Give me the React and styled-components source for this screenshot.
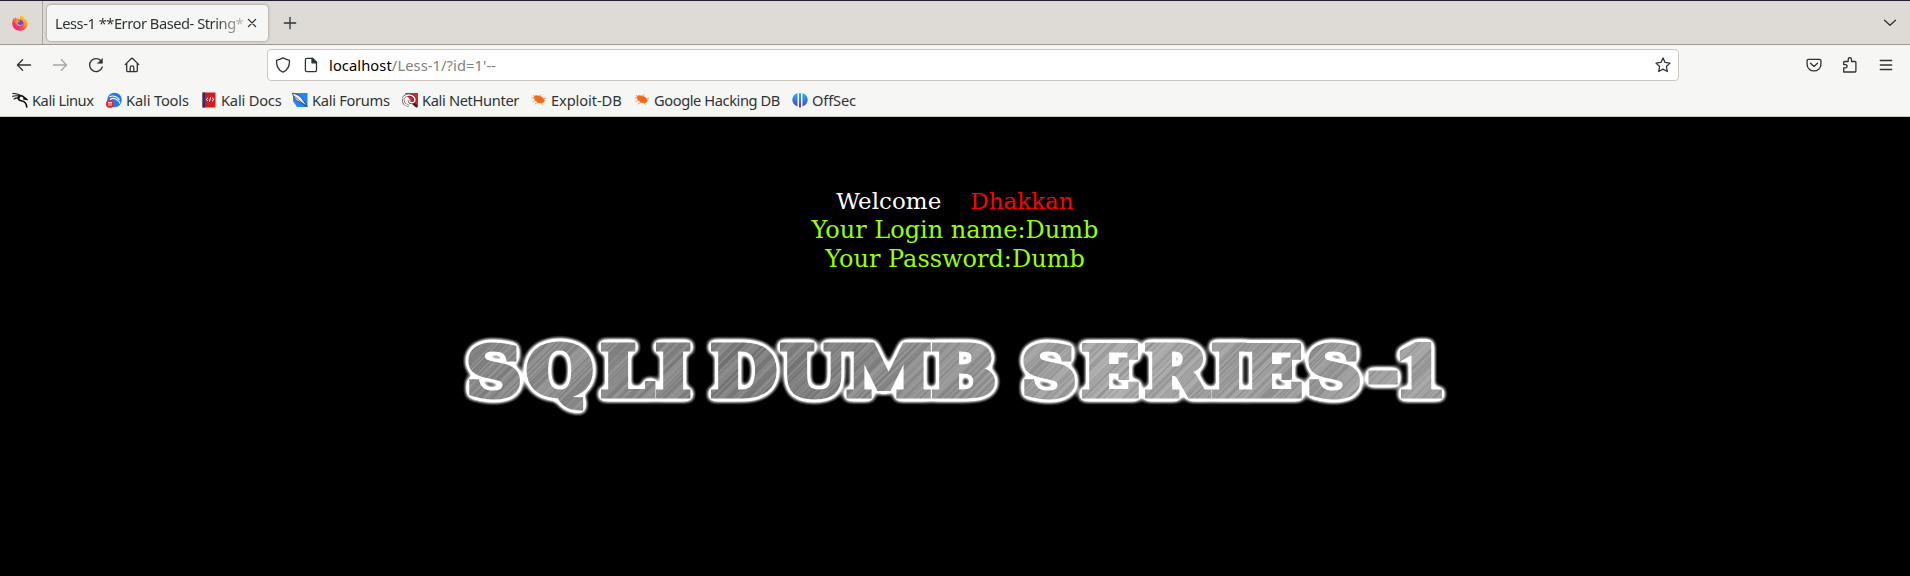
import React from 'react';
import styled, { createGlobalStyle } from 'styled-components';

const Global = createGlobalStyle`
  * { box-sizing: border-box; }
  body { margin: 0; background: #000; overflow: hidden; }
`;
const Window = styled.div`
  height: 576px;
  display: flex;
  flex-direction: column;
  background: #000;
  font-family: 'Noto Sans', sans-serif;
  font-size: 14.67px;
  color: #2e3436;
`;
const TabStrip = styled.header`
  height: 45px;
  flex: none;
  display: flex;
  align-items: center;
  background: #dedad6;
  border-top: 1px solid #241f31;
  border-bottom: 1px solid #9d9891;
`;
const PinnedArea = styled.div`
  width: 43px;
  height: 43px;
  padding: 14px 0 0 12px;
  border-right: 1px solid #a9a49e;
`;
const Tab = styled.div`
  width: 221px;
  height: 36px;
  margin: 1px 0 0 4px;
  padding: 0 8px;
  display: flex;
  align-items: center;
  justify-content: space-between;
  background: #f6f6f4;
  border-radius: 4px;
  box-shadow: 0 0 3px rgba(0, 0, 0, 0.4);
`;
const TabTitle = styled.span`
  width: 189px;
  white-space: nowrap;
  letter-spacing: -0.46px;
  mask-image: linear-gradient(to right, #000 160px, transparent 198px);
`;
const NewTab = styled.div`
  flex: 1;
  display: flex;
  padding-left: 14px;
`;
const TabList = styled.div`
  padding-right: 12px;
  display: flex;
`;
const Toolbar = styled.nav`
  height: 40px;
  flex: none;
  display: flex;
  align-items: center;
  background: #f6f6f4;
  padding: 0 16px;
`;
const NavButtons = styled.div`
  width: 251px;
  display: flex;
  gap: 20px;
`;
const UrlBar = styled.div`
  width: 1412px;
  height: 32px;
  display: flex;
  align-items: center;
  padding: 0 7px;
  background: #fff;
  border: 1px solid #cdc7c2;
  border-radius: 4px;
`;
const Url = styled.span`
  flex: 1;
  padding-left: 10px;
  color: #808182;
  white-space: nowrap;
  letter-spacing: 0.1px;
  b { font-weight: 400; color: #000; }
`;
const PageIcon = styled.span`
  display: flex;
  padding-left: 12px;
`;
const Actions = styled.div`
  flex: 1;
  display: flex;
  justify-content: flex-end;
  gap: 20px;
`;
const Bookmarks = styled.div`
  height: 32px;
  flex: none;
  display: flex;
  padding: 0 12px 1px;
  background: #f6f6f4;
  border-bottom: 1px solid #cdc7c2;
`;
const Bookmark = styled.div`
  width: ${(p) => p.$w}px;
  letter-spacing: ${(p) => p.$tracking}px;
  display: flex;
  align-items: center;
  gap: 4px;
  white-space: nowrap;
`;
const Glyph = styled.svg`
  width: 16px;
  height: 16px;
  flex: none;
  display: block;
  opacity: ${(p) => (p.$dim ? 0.4 : 1)};
`;
const Page = styled.main`
  flex: 1;
  background: #000;
  padding-top: 70px;
  display: flex;
  flex-direction: column;
  align-items: center;
  font-family: 'DejaVu Serif', serif;
  font-size: 24px;
  line-height: 29px;
`;
const Welcome = styled.div`
  display: flex;
  gap: 29px;
  font-size: 23px;
  color: #fff;
`;
const UserName = styled.span`
  color: #f00;
`;
const Result = styled.div`
  color: #9f0;
  white-space: nowrap;
`;
const Banner = styled.svg`
  width: 1000px;
  height: 90px;
  margin-top: 53px;
  display: block;
`;

const Line = ({ children, dim }) => (
  <Glyph viewBox="0 0 16 16" $dim={dim} fill="none" stroke="#2e3436" strokeWidth="1.3" strokeLinecap="round" strokeLinejoin="round">
    {children}
  </Glyph>
);

const KaliDragon = ({ color = '#111' }) => (
  <g fill="none" stroke={color} strokeLinecap="round">
    <path d="M.8 1.5c3-.2 5 .3 7 1.6M.6 4.3c3-1 5.4-.7 7.4.3M2 7c2-1.2 3.6-1.4 5.6-1" strokeWidth="1.1" />
    <path d="M6.8 4c2-.6 4.3-.1 6 2l1.3 1.1-2.2-.2M7.3 4.5c-2.2 3 .2 4.2 2.8 4.5 3 .4 4.2 2.4 4.7 5.8" strokeWidth="1.7" />
  </g>
);

const Bug = () => (
  <g>
    <path d="M2.6 4.2c1.800-1.200 3.800-.9 5.300-.4 2.500.4 4.500 1.700 5.300 3.800 1 .7.8 1.800-.2 2.200-1.200 1.900-4.300 2-6.800.2C4 8.800 2.600 6.700 2.600 4.200Z" fill="#f3691c" />
    <path d="m4.500 6-3.700-.3M5.500 8.500 1.500 9.500M7.500 10 3.500 12.200M9.500 10.500l2.500 2.300M7.500 4.500l3-2M12 7l3-1M4 5 2 3" stroke="#f58a4c" strokeWidth=".8" />
  </g>
);

const bookmarks = [
  { label: 'Kali Linux', w: 94, tracking: -0.45, icon: <KaliDragon /> },
  {
    label: 'Kali Tools', w: 95, tracking: -0.15,
    icon: (
      <>
        <circle cx="8.5" cy="8" r="7.3" fill="#2777ed" />
        <path d="M3.500 4.600c3-1 6-.7 8 1.300l2 1.800M4 7.600c3-2 5-1.500 7 .4 1.500.5 2.500 1.600 3 3.500" stroke="#fff" strokeWidth="1.2" fill="none" />
        <circle cx="3.9" cy="11.9" r="3.9" fill="#e8242d" />
        <path d="M2 10.500h4M3 10.500v3.400M5 10.500v3.400" stroke="#fff" strokeWidth=".8" />
      </>
    ),
  },
  {
    label: 'Kali Docs', w: 91, tracking: -0.2,
    icon: (
      <>
        <path d="M1.500.500h13v15h-13z" fill="#d71920" />
        <path d="M1.500.500h2.600v15H1.500z" fill="#20386e" />
        <path d="M7 5.800 5.200 7.500 7 9.200M11 5.800l1.800 1.700L11 9.200M9.700 5 8.400 10" stroke="#fff" strokeWidth="1" fill="none" />
      </>
    ),
  },
  {
    label: 'Kali Forums', w: 110, tracking: -0.3,
    icon: (
      <>
        <path d="M1 1h14.500v14H5L1 9z" fill="#2386f5" />
        <path d="M.5 1.200c5 .5 9 4 10.500 7l4.300 6.500-6.800-4.200C4 8.800 1.400 6 .5 1.200Z" fill="#e9f1f7" stroke="#29333d" strokeWidth=".8" />
        <path d="m2 4 12 10" stroke="#29333d" strokeWidth=".7" />
      </>
    ),
  },
  {
    label: 'Kali NetHunter', w: 129, tracking: -0.35,
    icon: (
      <>
        <path d="M3 1h13v11.500L13 15 9 9z" fill="#e1202c" />
        <path d="M.8 6.500C3.500 2.300 9.500 1.800 12.300 5.500c1.500 2.500.5 5-2 5.300-2 .2-3.500-1-3.300-2.600M1.500 7.500C1 11 3 13.500 6.500 13.500M10 10.500l5.500 4.300" stroke="#3d2227" strokeWidth="2.500" fill="none" />
        <path d="M.8 6.500C3.500 2.300 9.500 1.800 12.300 5.500c1.500 2.500.5 5-2 5.300-2 .2-3.500-1-3.300-2.600M1.500 7.500C1 11 3 13.500 6.500 13.500" stroke="#fff" strokeWidth="1.5" fill="none" />
      </>
    ),
  },
  { label: 'Exploit-DB', w: 103, tracking: -0.1, icon: <Bug /> },
  { label: 'Google Hacking DB', w: 158, tracking: -0.42, icon: <Bug /> },
  {
    label: 'OffSec', w: 80, tracking: -0.15,
    icon: (
      <>
        <defs>
          <linearGradient id="offsec" x2="0" y2="1">
            <stop stopColor="#20b9db" />
            <stop offset="1" stopColor="#5b35d5" />
          </linearGradient>
        </defs>
        <path d="M5.500 1C-1.500 3.500-1.500 12 5.500 14.500ZM10.500 1c7 2.500 7 11 0 13.500ZM7 1h2v14.500H7z" fill="url(#offsec)" />
      </>
    ),
  },
];

const bannerScale = 1.11;
const letterX = [466, 526, 600, 655, 688, 710, 780, 846, 931, 1000, 1021, 1081, 1144, 1211, 1244, 1306, 1367, 1393];

// Diagonal scratches of varying tone that give the lettering its brushed metal look.
const scratches = Array.from({ length: 560 }, (_, i) => {
  const r = Math.abs(Math.sin(i * 127.1) * 43758.5) % 1;
  return { x: 310 + i * 1.8, light: r > 0.5, alpha: 0.02 + Math.abs(r - 0.5) * 0.22 };
});

export default function App() {
  return (
    <Window>
      <Global />
      <TabStrip>
        <PinnedArea>
          <Glyph viewBox="0 0 16 16">
            <defs>
              <linearGradient id="flame" x1="1" y1="0" x2=".2" y2="1">
                <stop stopColor="#fff34f" />
                <stop offset=".4" stopColor="#ff9a24" />
                <stop offset=".75" stopColor="#ff3750" />
                <stop offset="1" stopColor="#e61e8d" />
              </linearGradient>
            </defs>
            <path d="M9.500.3c2 1.300 2.600 2.200 3 3.600 1-.1 1.600.3 2.100 1.100 2.600 5.200-.3 10.700-6.400 10.800C2.700 15.800-.2 11.700.3 7.300c.2-1.800.7-3.100 1.700-4.200L2.500 4l1-1.900 1 1.500c1.600-.3 2.700.1 3.500.8C7.600 2.800 8.100 1.200 9.500.3Z" fill="url(#flame)" />
            <circle cx="8" cy="8.4" r="3.4" fill="#7543d8" />
            <path d="M3.200 5.800c2-1.500 3.500-.5 4.800.6-1.100 0-1.400.8-2.500 1.200 0 3 4.300 3.300 5.500.7-.1 4.400-7.100 4.500-7.800-2.500Z" fill="#ff982a" />
          </Glyph>
        </PinnedArea>
        <Tab>
          <TabTitle>Less-1 **Error Based- String*</TabTitle>
          <Line><path d="m4.400 4.400 7.200 7.200M11.600 4.400l-7.200 7.200" /></Line>
        </Tab>
        <NewTab><Line><path d="M8 2.300v11.400M2.300 8h11.400" /></Line></NewTab>
        <TabList><Line><path d="m2.500 5.300 5.500 5 5.500-5" /></Line></TabList>
      </TabStrip>
      <Toolbar>
        <NavButtons>
          <Line><path d="M14.600 8H1.400m5.200-5.200L1.400 8l5.200 5.200" /></Line>
          <Line dim><path d="M1.400 8h13.200M9.400 2.800 14.600 8l-5.200 5.200" /></Line>
          <Line>
            <path d="M13.600 4.600A6.500 6.500 0 1 0 14.300 10" />
            <path d="M14.400 1.700v4.600H9.800Z" fill="#2e3436" strokeWidth=".6" />
          </Line>
          <Line><path d="m1.200 7.600 5.900-5.900a1.300 1.300 0 0 1 1.800 0l5.900 5.900M2.700 6.600v6.800a1.200 1.200 0 0 0 1.200 1.200h8.200a1.200 1.200 0 0 0 1.200-1.200V6.600M6.200 14.400v-3.700a1.800 1.800 0 0 1 3.600 0v3.700" /></Line>
        </NavButtons>
        <UrlBar>
          <Line><path d="M8 .9c2 1.200 4 1.800 6.500 2.400.2 5.400-1.200 9.800-6.500 11.800C2.700 13.100 1.300 8.700 1.500 3.300 4 2.700 6 2.100 8 .9Z" /></Line>
          <PageIcon>
            <Line>
              <path d="M3.800 1.300h5.700l4 4v7.900a1.400 1.400 0 0 1-1.400 1.400H3.800a1.400 1.400 0 0 1-1.400-1.400V2.700a1.400 1.400 0 0 1 1.400-1.400Z" />
              <path d="M9 1.300v4.500h4.500Z" fill="#2e3436" />
            </Line>
          </PageIcon>
          <Url><b>localhost</b>/Less-1/?id=1'--</Url>
          <Line><path d="m8 .9 2.100 4.500 4.900.7-3.600 3.400.9 5L8 12.100l-4.300 2.400.9-5L1 6.100l4.900-.7Z" /></Line>
        </UrlBar>
        <Actions>
          <Line><path d="M2.300 2.300h11.400a1.200 1.200 0 0 1 1.200 1.200v3.700c0 9-13.800 9-13.800 0V3.500a1.200 1.200 0 0 1 1.200-1.200ZM4.500 6.200 8 9.400l3.500-3.200" /></Line>
          <Line><path d="M1.700 15v-4.200h1.800a1.600 1.600 0 0 0 0-3.200H1.700V5.600a1.100 1.100 0 0 1 1.100-1.100h3.400V2.400a1.600 1.600 0 0 1 3.300 0v2.100h3.300a1.100 1.100 0 0 1 1.100 1.100v8.300a1.100 1.100 0 0 1-1.100 1.100Z" /></Line>
          <Line><path d="M2.300 3.500h11.400M2.300 8h11.400M2.300 12.500h11.400" /></Line>
        </Actions>
      </Toolbar>
      <Bookmarks>
        {bookmarks.map((b) => (
          <Bookmark key={b.label} $w={b.w} $tracking={b.tracking}>
            <Glyph viewBox="0 0 16 16">{b.icon}</Glyph>
            <span>{b.label}</span>
          </Bookmark>
        ))}
      </Bookmarks>
      <Page>
        <Welcome><span>Welcome</span><UserName>Dhakkan</UserName></Welcome>
        <Result>Your Login name:Dumb</Result>
        <Result>Your Password:Dumb</Result>
        <Banner viewBox="455 327 1000 90">
          <defs>
            <linearGradient id="metal" x1="0" y1="0" x2="1" y2="0">
              <stop stopColor="#8a8a8a" />
              <stop offset=".15" stopColor="#8e8e8e" />
              <stop offset=".3" stopColor="#7d7d7d" />
              <stop offset=".5" stopColor="#939393" />
              <stop offset=".65" stopColor="#aaa" />
              <stop offset=".85" stopColor="#999" />
              <stop offset="1" stopColor="#a5a5a5" />
            </linearGradient>
            <pattern id="brushed" x="400" y="320" width="920" height="105" viewBox="400 320 920 105" patternUnits="userSpaceOnUse">
              <path d="M400 320h920v105H400z" fill="url(#metal)" />
              {scratches.map((s) => (
                <path key={s.x} d={`M${s.x} 425 l95 -105`} stroke={s.light ? '#fff' : '#000'} strokeOpacity={s.alpha} strokeWidth="1.3" />
              ))}
            </pattern>
            <filter id="glow" filterUnits="userSpaceOnUse" x="400" y="320" width="920" height="105" colorInterpolationFilters="sRGB">
              <feGaussianBlur in="SourceAlpha" stdDeviation="3.2 3.6" />
              <feComponentTransfer result="halo"><feFuncA type="linear" slope="5" intercept="-.16" /></feComponentTransfer>
              <feFlood floodColor="#fff" />
              <feComposite in2="halo" operator="in" result="white" />
              <feMerge><feMergeNode in="white" /><feMergeNode in="SourceGraphic" /></feMerge>
            </filter>
          </defs>
          <g transform={`scale(${bannerScale} 1)`} filter="url(#glow)">
            <text x={letterX.map((x) => x / bannerScale).join(' ')} y="395.6" fontFamily="DejaVu Serif" fontWeight="700" fontSize="69.8" fill="url(#brushed)" stroke="url(#brushed)" strokeWidth="4.8">
              SQLI DUMB SERIES-1
            </text>
          </g>
        </Banner>
      </Page>
    </Window>
  );
}
